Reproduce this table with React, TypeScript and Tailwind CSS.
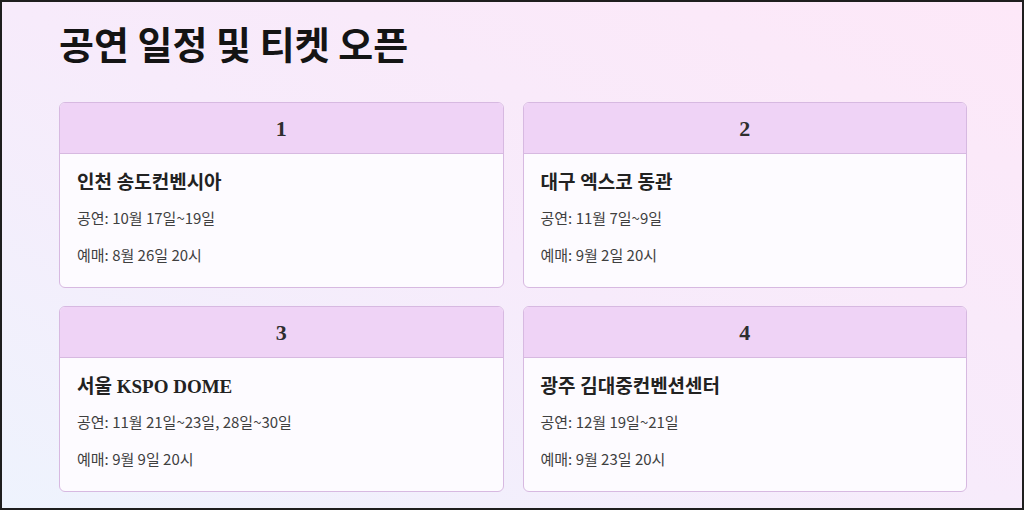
import React from "react";

type Item = { n: string; venue: string; show: string; ticket: string };

const items: Item[] = [
  { n: "1", venue: "인천 송도컨벤시아", show: "공연: 10월 17일~19일", ticket: "예매: 8월 26일 20시" },
  { n: "2", venue: "대구 엑스코 동관", show: "공연: 11월 7일~9일", ticket: "예매: 9월 2일 20시" },
  { n: "3", venue: "서울 KSPO DOME", show: "공연: 11월 21일~23일, 28일~30일", ticket: "예매: 9월 9일 20시" },
  { n: "4", venue: "광주 김대중컨벤션센터", show: "공연: 12월 19일~21일", ticket: "예매: 9월 23일 20시" },
];

function Card({ item }: { item: Item }) {
  return (
    <div className="rounded-md border border-[#d7b9e1] bg-[#fdfbff] overflow-hidden">
      <div className="h-[51px] flex items-center justify-center bg-[#efd3f6] border-b border-[#d7b9e1]">
        <span className="text-[22px] font-semibold text-[#2e2e2e] font-['Liberation_Serif','Noto_Sans_CJK_KR',serif]">
          {item.n}
        </span>
      </div>
      <div className="px-[17px] pt-[15px] pb-[22px]">
        <h3 className="text-[19px] leading-[28px] font-bold text-[#222] font-['Liberation_Serif','Noto_Sans_CJK_KR',serif]">
          {item.venue}
        </h3>
        <p className="mt-[10px] text-[15px] leading-[21px] text-[#3f3f3f] font-['Noto_Sans_CJK_KR',sans-serif]">
          {item.show}
        </p>
        <p className="mt-[16px] text-[15px] leading-[21px] text-[#3f3f3f] font-['Noto_Sans_CJK_KR',sans-serif]">
          {item.ticket}
        </p>
      </div>
    </div>
  );
}

export default function App() {
  return (
    <div className="w-[1024px] h-[510px] box-border border-2 border-[#1e1e1e] bg-gradient-to-tr from-[#eef3fd] via-[#f7ebfb] to-[#fde8f8] overflow-hidden">
      <div className="pl-[57px] pt-[20px] w-[965px]">
        <h1 className="text-[38px] leading-[42px] font-bold text-[#141414] font-['Noto_Sans_CJK_KR',sans-serif]">
          공연 일정 및 티켓 오픈
        </h1>
        <div className="mt-[38px] grid grid-cols-2 gap-x-[19px] gap-y-[18px]">
          {items.map((it) => (
            <Card key={it.n} item={it} />
          ))}
        </div>
      </div>
    </div>
  );
}
